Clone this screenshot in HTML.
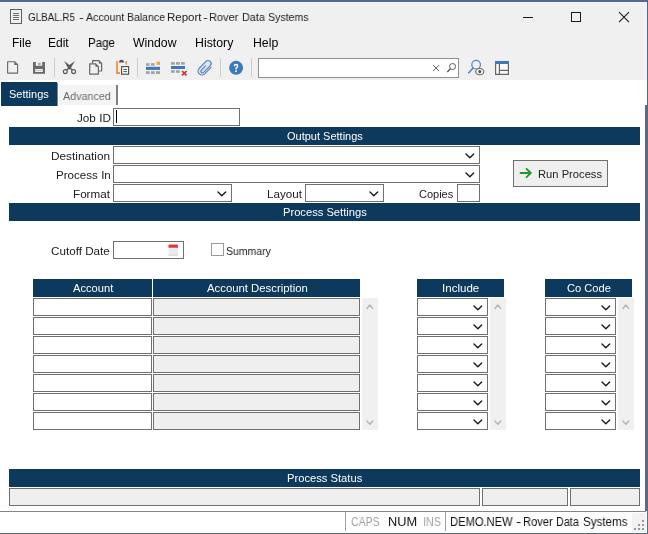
<!DOCTYPE html>
<html><head><meta charset="utf-8"><title>GLBAL.R5</title>
<style>
html,body{margin:0;padding:0;background:#fff;}
body{width:648px;height:534px;position:relative;overflow:hidden;font-family:"Liberation Sans",sans-serif;}
.t{will-change:transform;position:absolute;white-space:nowrap;line-height:16px;transform-origin:0 50%;}
.r{position:absolute;}
.bx{position:absolute;border:1px solid #707070;}
svg{display:block;overflow:visible}
</style></head><body>
<div class="r" style="left:0px;top:0px;width:648px;height:80px;background:#f0f0f0;"></div>
<div class="r" style="left:0px;top:0px;width:648px;height:2px;background:#54698f;"></div>
<div class="r" style="left:0px;top:2px;width:648px;height:1px;background:#f5f8fa;"></div>
<div class="r" style="left:644px;top:2px;width:3px;height:78px;background:#eef2fa;"></div>
<div class="r" style="left:646.5px;top:0px;width:1.5px;height:105px;background:#55658b;"></div>
<div class="r" style="left:645px;top:105px;width:3px;height:406px;background:#5d6885;"></div>
<div class="r" style="left:647px;top:511px;width:1px;height:23px;background:#5b6c93;"></div>
<div class="r" style="left:0px;top:533px;width:648px;height:1px;background:#54698f;"></div>
<div class="r" style="left:0px;top:511px;width:646px;height:1px;background:#858585;"></div>
<div class="r" style="left:1px;top:82px;width:56px;height:24px;background:#0d395d;"></div>
<div class="r" style="left:57px;top:83px;width:1.4px;height:22.6px;background:#858585;"></div>
<div class="r" style="left:59px;top:85px;width:56.5px;height:19.5px;background:#f4f4f4;"></div>
<div class="r" style="left:116px;top:85px;width:1.5px;height:20px;background:#808080;"></div>
<div class="r" style="left:9px;top:127px;width:631px;height:18px;background:#0d395d;"></div>
<div class="r" style="left:9px;top:203px;width:631px;height:18px;background:#0d395d;"></div>
<div class="r" style="left:9px;top:469px;width:631px;height:18px;background:#0d395d;"></div>
<div class="bx" style="left:113px;top:108px;width:125px;height:16px;background:#fff;"></div>
<div class="r" style="left:116px;top:110px;width:1px;height:13px;background:#000;"></div>
<div class="bx" style="left:113px;top:146px;width:365px;height:16px;background:#fff;"></div>
<svg class="r" style="left:464.80px;top:152.80px" width="9.7" height="5.8" viewBox="-1 -1 9.7 5.8"><path d="M0 0 L3.85 3.8 L7.7 0" fill="none" stroke="#1a1a1a" stroke-width="1.4" stroke-linecap="round" stroke-linejoin="round"/></svg>
<div class="bx" style="left:113px;top:165px;width:365px;height:16px;background:#fff;"></div>
<svg class="r" style="left:464.80px;top:171.80px" width="9.7" height="5.8" viewBox="-1 -1 9.7 5.8"><path d="M0 0 L3.85 3.8 L7.7 0" fill="none" stroke="#1a1a1a" stroke-width="1.4" stroke-linecap="round" stroke-linejoin="round"/></svg>
<div class="bx" style="left:113px;top:184px;width:117px;height:16px;background:#fff;"></div>
<svg class="r" style="left:216.80px;top:190.80px" width="9.7" height="5.8" viewBox="-1 -1 9.7 5.8"><path d="M0 0 L3.85 3.8 L7.7 0" fill="none" stroke="#1a1a1a" stroke-width="1.4" stroke-linecap="round" stroke-linejoin="round"/></svg>
<div class="bx" style="left:305px;top:184px;width:77px;height:16px;background:#fff;"></div>
<svg class="r" style="left:368.80px;top:190.80px" width="9.7" height="5.8" viewBox="-1 -1 9.7 5.8"><path d="M0 0 L3.85 3.8 L7.7 0" fill="none" stroke="#1a1a1a" stroke-width="1.4" stroke-linecap="round" stroke-linejoin="round"/></svg>
<div class="bx" style="left:457px;top:184px;width:21px;height:16px;background:#fff;"></div>
<div class="bx" style="left:113px;top:241px;width:69px;height:16px;background:#fff;"></div>
<svg class="r" style="left:167px;top:243px" width="13" height="14" viewBox="0 0 13 14"><rect x="1.5" y="2" width="9.5" height="11" rx="1" fill="#e4eef0"/><rect x="1.5" y="11.6" width="9.5" height="0.9" fill="#d0d4d6"/><path d="M1.5 4.8 V2.6 Q1.5 1.5 2.6 1.5 H9.9 Q11 1.5 11 2.6 V4.8 Z" fill="#e0373c"/></svg>
<div class="bx" style="left:211px;top:243px;width:11px;height:11px;background:#fff;border-color:#9a9a9a"></div>
<div class="bx" style="left:513px;top:160px;width:93px;height:25px;background:#efefef;border-color:#707070"></div>
<svg class="r" style="left:519px;top:167px" width="14" height="12" viewBox="0 0 14 12"><path d="M1.5 6 H11.5 M7.5 1.8 L11.8 6 L7.5 10.2" fill="none" stroke="#1e9a2c" stroke-width="1.8" stroke-linecap="round" stroke-linejoin="round"/></svg>
<div class="r" style="left:33px;top:279px;width:119px;height:18px;background:#0d395d;"></div>
<div class="r" style="left:153px;top:279px;width:207px;height:18px;background:#0d395d;"></div>
<div class="r" style="left:417px;top:279px;width:87px;height:18px;background:#0d395d;"></div>
<div class="r" style="left:545px;top:279px;width:87px;height:18px;background:#0d395d;"></div>
<div class="r" style="left:362px;top:298px;width:16px;height:132px;background:#f0f0f0;"></div>
<svg class="r" style="left:365.80px;top:304.40px" width="7.6" height="5.4" viewBox="-1 -1 7.6 5.4"><path d="M0 3.4 L2.8 0 L5.6 3.4" fill="none" stroke="#b4b4b4" stroke-width="1.5" stroke-linecap="round" stroke-linejoin="round"/></svg>
<svg class="r" style="left:365.80px;top:419.80px" width="7.6" height="5.4" viewBox="-1 -1 7.6 5.4"><path d="M0 0 L2.8 3.4 L5.6 0" fill="none" stroke="#b4b4b4" stroke-width="1.5" stroke-linecap="round" stroke-linejoin="round"/></svg>
<div class="r" style="left:490px;top:298px;width:16px;height:132px;background:#f0f0f0;"></div>
<svg class="r" style="left:493.80px;top:304.40px" width="7.6" height="5.4" viewBox="-1 -1 7.6 5.4"><path d="M0 3.4 L2.8 0 L5.6 3.4" fill="none" stroke="#b4b4b4" stroke-width="1.5" stroke-linecap="round" stroke-linejoin="round"/></svg>
<svg class="r" style="left:493.80px;top:419.80px" width="7.6" height="5.4" viewBox="-1 -1 7.6 5.4"><path d="M0 0 L2.8 3.4 L5.6 0" fill="none" stroke="#b4b4b4" stroke-width="1.5" stroke-linecap="round" stroke-linejoin="round"/></svg>
<div class="r" style="left:618px;top:298px;width:16px;height:132px;background:#f0f0f0;"></div>
<svg class="r" style="left:621.80px;top:304.40px" width="7.6" height="5.4" viewBox="-1 -1 7.6 5.4"><path d="M0 3.4 L2.8 0 L5.6 3.4" fill="none" stroke="#b4b4b4" stroke-width="1.5" stroke-linecap="round" stroke-linejoin="round"/></svg>
<svg class="r" style="left:621.80px;top:419.80px" width="7.6" height="5.4" viewBox="-1 -1 7.6 5.4"><path d="M0 0 L2.8 3.4 L5.6 0" fill="none" stroke="#b4b4b4" stroke-width="1.5" stroke-linecap="round" stroke-linejoin="round"/></svg>
<div class="bx" style="left:33px;top:298px;width:117px;height:16px;background:#fff;"></div>
<div class="bx" style="left:153px;top:298px;width:205px;height:16px;background:#efefef;"></div>
<div class="bx" style="left:417px;top:298px;width:69px;height:16px;background:#fff;"></div>
<svg class="r" style="left:472.80px;top:304.80px" width="9.7" height="5.8" viewBox="-1 -1 9.7 5.8"><path d="M0 0 L3.85 3.8 L7.7 0" fill="none" stroke="#1a1a1a" stroke-width="1.4" stroke-linecap="round" stroke-linejoin="round"/></svg>
<div class="bx" style="left:545px;top:298px;width:69px;height:16px;background:#fff;"></div>
<svg class="r" style="left:600.80px;top:304.80px" width="9.7" height="5.8" viewBox="-1 -1 9.7 5.8"><path d="M0 0 L3.85 3.8 L7.7 0" fill="none" stroke="#1a1a1a" stroke-width="1.4" stroke-linecap="round" stroke-linejoin="round"/></svg>
<div class="bx" style="left:33px;top:317px;width:117px;height:16px;background:#fff;"></div>
<div class="bx" style="left:153px;top:317px;width:205px;height:16px;background:#efefef;"></div>
<div class="bx" style="left:417px;top:317px;width:69px;height:16px;background:#fff;"></div>
<svg class="r" style="left:472.80px;top:323.80px" width="9.7" height="5.8" viewBox="-1 -1 9.7 5.8"><path d="M0 0 L3.85 3.8 L7.7 0" fill="none" stroke="#1a1a1a" stroke-width="1.4" stroke-linecap="round" stroke-linejoin="round"/></svg>
<div class="bx" style="left:545px;top:317px;width:69px;height:16px;background:#fff;"></div>
<svg class="r" style="left:600.80px;top:323.80px" width="9.7" height="5.8" viewBox="-1 -1 9.7 5.8"><path d="M0 0 L3.85 3.8 L7.7 0" fill="none" stroke="#1a1a1a" stroke-width="1.4" stroke-linecap="round" stroke-linejoin="round"/></svg>
<div class="bx" style="left:33px;top:336px;width:117px;height:16px;background:#fff;"></div>
<div class="bx" style="left:153px;top:336px;width:205px;height:16px;background:#efefef;"></div>
<div class="bx" style="left:417px;top:336px;width:69px;height:16px;background:#fff;"></div>
<svg class="r" style="left:472.80px;top:342.80px" width="9.7" height="5.8" viewBox="-1 -1 9.7 5.8"><path d="M0 0 L3.85 3.8 L7.7 0" fill="none" stroke="#1a1a1a" stroke-width="1.4" stroke-linecap="round" stroke-linejoin="round"/></svg>
<div class="bx" style="left:545px;top:336px;width:69px;height:16px;background:#fff;"></div>
<svg class="r" style="left:600.80px;top:342.80px" width="9.7" height="5.8" viewBox="-1 -1 9.7 5.8"><path d="M0 0 L3.85 3.8 L7.7 0" fill="none" stroke="#1a1a1a" stroke-width="1.4" stroke-linecap="round" stroke-linejoin="round"/></svg>
<div class="bx" style="left:33px;top:355px;width:117px;height:16px;background:#fff;"></div>
<div class="bx" style="left:153px;top:355px;width:205px;height:16px;background:#efefef;"></div>
<div class="bx" style="left:417px;top:355px;width:69px;height:16px;background:#fff;"></div>
<svg class="r" style="left:472.80px;top:361.80px" width="9.7" height="5.8" viewBox="-1 -1 9.7 5.8"><path d="M0 0 L3.85 3.8 L7.7 0" fill="none" stroke="#1a1a1a" stroke-width="1.4" stroke-linecap="round" stroke-linejoin="round"/></svg>
<div class="bx" style="left:545px;top:355px;width:69px;height:16px;background:#fff;"></div>
<svg class="r" style="left:600.80px;top:361.80px" width="9.7" height="5.8" viewBox="-1 -1 9.7 5.8"><path d="M0 0 L3.85 3.8 L7.7 0" fill="none" stroke="#1a1a1a" stroke-width="1.4" stroke-linecap="round" stroke-linejoin="round"/></svg>
<div class="bx" style="left:33px;top:374px;width:117px;height:16px;background:#fff;"></div>
<div class="bx" style="left:153px;top:374px;width:205px;height:16px;background:#efefef;"></div>
<div class="bx" style="left:417px;top:374px;width:69px;height:16px;background:#fff;"></div>
<svg class="r" style="left:472.80px;top:380.80px" width="9.7" height="5.8" viewBox="-1 -1 9.7 5.8"><path d="M0 0 L3.85 3.8 L7.7 0" fill="none" stroke="#1a1a1a" stroke-width="1.4" stroke-linecap="round" stroke-linejoin="round"/></svg>
<div class="bx" style="left:545px;top:374px;width:69px;height:16px;background:#fff;"></div>
<svg class="r" style="left:600.80px;top:380.80px" width="9.7" height="5.8" viewBox="-1 -1 9.7 5.8"><path d="M0 0 L3.85 3.8 L7.7 0" fill="none" stroke="#1a1a1a" stroke-width="1.4" stroke-linecap="round" stroke-linejoin="round"/></svg>
<div class="bx" style="left:33px;top:393px;width:117px;height:16px;background:#fff;"></div>
<div class="bx" style="left:153px;top:393px;width:205px;height:16px;background:#efefef;"></div>
<div class="bx" style="left:417px;top:393px;width:69px;height:16px;background:#fff;"></div>
<svg class="r" style="left:472.80px;top:399.80px" width="9.7" height="5.8" viewBox="-1 -1 9.7 5.8"><path d="M0 0 L3.85 3.8 L7.7 0" fill="none" stroke="#1a1a1a" stroke-width="1.4" stroke-linecap="round" stroke-linejoin="round"/></svg>
<div class="bx" style="left:545px;top:393px;width:69px;height:16px;background:#fff;"></div>
<svg class="r" style="left:600.80px;top:399.80px" width="9.7" height="5.8" viewBox="-1 -1 9.7 5.8"><path d="M0 0 L3.85 3.8 L7.7 0" fill="none" stroke="#1a1a1a" stroke-width="1.4" stroke-linecap="round" stroke-linejoin="round"/></svg>
<div class="bx" style="left:33px;top:412px;width:117px;height:16px;background:#fff;"></div>
<div class="bx" style="left:153px;top:412px;width:205px;height:16px;background:#efefef;"></div>
<div class="bx" style="left:417px;top:412px;width:69px;height:16px;background:#fff;"></div>
<svg class="r" style="left:472.80px;top:418.80px" width="9.7" height="5.8" viewBox="-1 -1 9.7 5.8"><path d="M0 0 L3.85 3.8 L7.7 0" fill="none" stroke="#1a1a1a" stroke-width="1.4" stroke-linecap="round" stroke-linejoin="round"/></svg>
<div class="bx" style="left:545px;top:412px;width:69px;height:16px;background:#fff;"></div>
<svg class="r" style="left:600.80px;top:418.80px" width="9.7" height="5.8" viewBox="-1 -1 9.7 5.8"><path d="M0 0 L3.85 3.8 L7.7 0" fill="none" stroke="#1a1a1a" stroke-width="1.4" stroke-linecap="round" stroke-linejoin="round"/></svg>
<div class="bx" style="left:9px;top:488px;width:469px;height:16px;background:#efefef;"></div>
<div class="bx" style="left:482px;top:488px;width:84px;height:16px;background:#efefef;"></div>
<div class="bx" style="left:570px;top:488px;width:68px;height:16px;background:#efefef;"></div>
<div class="r" style="left:345px;top:512px;width:1px;height:19px;background:#a0a0a0;"></div>
<div class="r" style="left:445px;top:512px;width:1px;height:19px;background:#a0a0a0;"></div>
<div class="r" style="left:632px;top:513px;width:14px;height:19px;background:#f2f2f2;"></div>
<div class="r" style="left:642px;top:520px;width:2px;height:2px;background:#9a9a9a;"></div>
<div class="r" style="left:638px;top:524px;width:2px;height:2px;background:#9a9a9a;"></div>
<div class="r" style="left:642px;top:524px;width:2px;height:2px;background:#9a9a9a;"></div>
<div class="r" style="left:634px;top:528px;width:2px;height:2px;background:#9a9a9a;"></div>
<div class="r" style="left:638px;top:528px;width:2px;height:2px;background:#9a9a9a;"></div>
<div class="r" style="left:642px;top:528px;width:2px;height:2px;background:#9a9a9a;"></div>
<!-- title icon -->
<svg class="r" style="left:0;top:0" width="648" height="82" viewBox="0 0 648 82">
<g fill="none" stroke="#5f5f5f" stroke-width="1">
<rect x="10.5" y="9.5" width="11" height="14"/>
<path d="M13 13.5H19M13 15.5H19M13 17.5H19M13 19.5H19" stroke="#6e6e6e"/>
</g>
<!-- window controls -->
<g fill="none" stroke="#1a1a1a" stroke-width="1">
<path d="M523 17.5H533"/>
<rect x="571.5" y="12.5" width="9" height="9"/>
<path d="M619 12.2L629 22.2M629 12.2L619 22.2" stroke-width="1.1"/>
</g>
<!-- separators -->
<g stroke="#cdcdcd" stroke-width="1">
<path d="M54.5 58V77M137.5 58V77M220.5 58V77M251.5 58V77"/>
</g>
<!-- new doc -->
<g fill="none" stroke="#686868" stroke-width="1.1" stroke-linejoin="round">
<path d="M7.6 61.7H14.6L17.6 64.7V73.1H7.6Z"/>
<path d="M14.4 61.7V65H17.6Z" fill="#666" stroke="none"/>
</g>
<!-- save -->
<g>
<rect x="33" y="62" width="12" height="11.8" fill="#6a6a6a"/>
<rect x="35.8" y="62" width="6.4" height="3.8" fill="#f0f0f0"/>
<rect x="38.2" y="62.7" width="2.4" height="2.6" fill="#a8a8a8"/>
<rect x="35.2" y="69" width="7.6" height="3" fill="#f0f0f0"/>
<rect x="36" y="70.2" width="6" height="0.7" fill="#b0b0b0"/>
</g>
<!-- scissors -->
<g fill="none" stroke="#5a5a5a" stroke-width="1.2">
<circle cx="65.3" cy="71.6" r="1.95"/>
<circle cx="73.6" cy="71.6" r="1.95"/>
<path d="M64.1 61L71.5 66.5L69 69.8Z" fill="#5a5a5a" stroke="none"/>
<path d="M74.8 61L67.4 66.5L69.9 69.8Z" fill="#5a5a5a" stroke="none"/>
<path d="M70 67.8L72.4 70.2M68.9 67.8L66.5 70.2" stroke-width="1.3"/>
</g>
<!-- copy -->
<g fill="none" stroke="#666" stroke-width="1.2" stroke-linejoin="round">
<path d="M92.6 63.2V60.7H99L101.6 63.3V71H99"/>
<path d="M98.8 60.7V63.4H101.6Z" fill="#666" stroke="none"/>
<path d="M89.7 63.8H95.6L98.4 66.6V74.2H89.7Z"/>
<path d="M95.4 63.8V66.8H98.4Z" fill="#666" stroke="none"/>
</g>
<!-- paste -->
<g>
<path d="M117 61V73H120" fill="none" stroke="#f0943a" stroke-width="1.8"/>
<path d="M126.2 61V64.6" fill="none" stroke="#f0943a" stroke-width="1.6"/>
<path d="M119 62.6Q119 59.8 121.5 59.8Q124 59.8 124 62.6Z" fill="#57506a"/>
<rect x="121.6" y="66.6" width="7" height="7.6" fill="#fff" stroke="#555" stroke-width="1.2"/>
<path d="M123.3 69.4H127M123.3 71.6H127" stroke="#555" stroke-width="1"/>
</g>
<!-- insert row -->
<g>
<rect x="146" y="63.2" width="3.6" height="2.5" fill="#a2a2a2"/><rect x="151" y="63.2" width="3.6" height="2.5" fill="#a2a2a2"/>
<rect x="156.6" y="61.7" width="3.4" height="3.2" fill="#f0a04a"/>
<rect x="146" y="66.8" width="14" height="3.1" fill="#3d78b8"/>
<rect x="146" y="71.2" width="3.6" height="2.8" fill="#a2a2a2"/><rect x="151" y="71.2" width="3.6" height="2.8" fill="#a2a2a2"/><rect x="156" y="71.2" width="4" height="2.8" fill="#a2a2a2"/>
</g>
<!-- delete row -->
<g>
<rect x="171" y="62.1" width="3.8" height="2.6" fill="#a2a2a2"/><rect x="176" y="62.1" width="3.8" height="2.6" fill="#a2a2a2"/><rect x="181" y="62.1" width="3.8" height="2.6" fill="#a2a2a2"/>
<rect x="171" y="66" width="14" height="3" fill="#3d78b8"/>
<rect x="171" y="70.2" width="3.8" height="2.6" fill="#a2a2a2"/><rect x="176" y="70.2" width="3.8" height="2.6" fill="#a2a2a2"/>
<path d="M182 71L186.6 75.4M186.6 71L182 75.4" stroke="#d22c3c" stroke-width="1.7" fill="none"/>
</g>
<!-- paperclip -->
<g transform="translate(204.7 67.6) rotate(44)" fill="none" stroke="#5881b2" stroke-width="1.15" stroke-linecap="round">
<path d="M-3.4 4.45V-5.3A3 3 0 0 1 2.6 -5.3V4.45A3 3 0 0 1 -3.4 4.45Z" fill="#d6e8f9" stroke="none"/>
<path d="M4.3 -4.6V4.45A3.85 3.85 0 0 1 -3.4 4.45V-5.3A3 3 0 0 1 2.6 -5.3V4.2A1.6 1.6 0 0 1 -0.6 4.2V-1.8"/>
</g>
<!-- help -->
<circle cx="236.1" cy="67.85" r="7" fill="#3a79bd"/>
<path d="M234.4 66.2Q234.4 64.6 236 64.6Q237.6 64.6 237.6 66.1Q237.6 67.1 236.7 67.7Q236 68.2 236 69.4" fill="none" stroke="#fff" stroke-width="1.5" stroke-linecap="butt"/>
<rect x="235.2" y="70.4" width="1.6" height="1.7" fill="#fff"/>
<!-- search box -->
<rect x="258.5" y="58.5" width="200" height="19" fill="#fff" stroke="#909090" stroke-width="1"/>
<path d="M433.1 65.1L439.1 71.1M439.1 65.1L433.1 71.1" stroke="#555" stroke-width="0.95" fill="none"/>
<g fill="none" stroke="#5a5a5a"><circle cx="452.6" cy="66.5" r="3" stroke-width="1"/><path d="M450.5 68.8L447.3 72" stroke-width="1.4"/></g>
<!-- find (blue magnifier + eye) -->
<g fill="none">
<circle cx="476.1" cy="64.7" r="4.3" stroke="#5585c2" stroke-width="1.2"/>
<path d="M473.1 68L468.8 72.8" stroke="#5585c2" stroke-width="1.6" stroke-linecap="round"/>
<ellipse cx="479.8" cy="71.6" rx="4.1" ry="3.1" fill="#f6f6f6" stroke="#6a6a6a" stroke-width="1.1"/>
<circle cx="479.8" cy="71.6" r="1.55" fill="#555"/>
</g>
<!-- layout -->
<g>
<rect x="495.6" y="63" width="12.8" height="11.3" fill="#fbfbfb"/>
<rect x="495" y="61" width="14" height="3" fill="#3d78b8"/>
<path d="M495.6 64V74.3H508.4V64M499.4 64V74.3M499.4 70.3H508.4" fill="none" stroke="#666" stroke-width="1.2"/>
</g>
</svg>

<span class="t" id="ti1" style="left:28.37px;top:9.02px;font-size:11.5px;color:#222;transform:scaleX(0.8556)">GLBAL.R5</span>
<span class="t" id="ti2" style="left:78.86px;top:9.02px;font-size:11.5px;color:#222;transform:scaleX(1.2727)">-</span>
<span class="t" id="ti3" style="left:85.97px;top:9.02px;font-size:11.5px;color:#222;transform:scaleX(0.9212)">Account</span>
<span class="t" id="ti4" style="left:127.09px;top:9.02px;font-size:11.5px;color:#222;transform:scaleX(0.9125)">Balance</span>
<span class="t" id="ti5" style="left:166.51px;top:9.02px;font-size:11.5px;color:#222;transform:scaleX(0.9910)">Report</span>
<span class="t" id="ti6" style="left:203.36px;top:9.02px;font-size:11.5px;color:#222;transform:scaleX(1.2727)">-</span>
<span class="t" id="ti7" style="left:209.04px;top:9.02px;font-size:11.5px;color:#222;transform:scaleX(0.9559)">Rover</span>
<span class="t" id="ti8" style="left:241.76px;top:9.02px;font-size:11.5px;color:#222;transform:scaleX(0.9376)">Data</span>
<span class="t" id="ti9" style="left:268.01px;top:9.02px;font-size:11.5px;color:#222;transform:scaleX(0.9209)">Systems</span>
<span class="t" id="m1" style="left:11.51px;top:35.44px;font-size:12px;color:#000;transform:scaleX(0.9859)">File</span>
<span class="t" id="m2" style="left:48.21px;top:35.44px;font-size:12px;color:#000;transform:scaleX(0.9924)">Edit</span>
<span class="t" id="m3" style="left:87.74px;top:35.44px;font-size:12px;color:#000;transform:scaleX(0.9623)">Page</span>
<span class="t" id="m4" style="left:132.95px;top:35.44px;font-size:12px;color:#000;transform:scaleX(1.0188)">Window</span>
<span class="t" id="m5" style="left:195.47px;top:35.44px;font-size:12px;color:#000;transform:scaleX(1.0262)">History</span>
<span class="t" id="m6" style="left:252.68px;top:35.44px;font-size:12px;color:#000;transform:scaleX(1.0237)">Help</span>
<span class="t" id="t1" style="left:8.96px;top:85.99px;font-size:11px;color:#fff;transform:scaleX(0.9910)">Settings</span>
<span class="t" id="t2" style="left:62.96px;top:87.79px;font-size:11px;color:#6a6a6a;transform:scaleX(0.9771)">Advanced</span>
<span class="t" id="l1" style="left:76.73px;top:110.19px;font-size:11px;color:#202020;transform:scaleX(1.0645)">Job ID</span>
<span class="t" id="l2" style="left:51.43px;top:148.19px;font-size:11px;color:#202020;transform:scaleX(1.0748)">Destination</span>
<span class="t" id="l3" style="left:55.95px;top:167.19px;font-size:11px;color:#202020;transform:scaleX(1.0547)">Process In</span>
<span class="t" id="l4" style="left:73.14px;top:186.19px;font-size:11px;color:#202020;transform:scaleX(1.0607)">Format</span>
<span class="t" id="l5" style="left:266.64px;top:186.19px;font-size:11px;color:#202020;transform:scaleX(1.0563)">Layout</span>
<span class="t" id="l6" style="left:419.20px;top:186.19px;font-size:11px;color:#202020;transform:scaleX(1.0000)">Copies</span>
<span class="t" id="l7" style="left:51.17px;top:243.19px;font-size:11px;color:#202020;transform:scaleX(1.0606)">Cutoff Date</span>
<span class="t" id="l8" style="left:226.08px;top:243.19px;font-size:11px;color:#202020;transform:scaleX(0.9535)">Summary</span>
<span class="t" id="h1" style="left:286.90px;top:127.79px;font-size:11px;color:#fff;transform:scaleX(1.0000)">Output Settings</span>
<span class="t" id="h2" style="left:282.69px;top:203.89px;font-size:11px;color:#fff;transform:scaleX(1.0142)">Process Settings</span>
<span class="t" id="h3" style="left:286.98px;top:469.89px;font-size:11px;color:#fff;transform:scaleX(1.0172)">Process Status</span>
<span class="t" id="g1" style="left:72.75px;top:280.19px;font-size:11px;color:#fff;transform:scaleX(1.0127)">Account</span>
<span class="t" id="g2" style="left:206.74px;top:280.19px;font-size:11px;color:#fff;transform:scaleX(1.0309)">Account Description</span>
<span class="t" id="g3" style="left:442.35px;top:280.19px;font-size:11px;color:#fff;transform:scaleX(1.0500)">Include</span>
<span class="t" id="g4" style="left:566.69px;top:280.19px;font-size:11px;color:#fff;transform:scaleX(1.0118)">Co Code</span>
<span class="t" id="rp" style="left:538.38px;top:166.19px;font-size:11px;color:#222;transform:scaleX(1.0170)">Run Process</span>
<span class="t" id="s1" style="left:350.66px;top:513.64px;font-size:12px;color:#a3a3a3;transform:scaleX(0.8724)">CAPS</span>
<span class="t" id="s2" style="left:387.53px;top:513.64px;font-size:12px;color:#111;transform:scaleX(1.0667)">NUM</span>
<span class="t" id="s3" style="left:423.10px;top:513.64px;font-size:12px;color:#a3a3a3;transform:scaleX(0.9027)">INS</span>
<span class="t" id="s4" style="left:449.67px;top:513.64px;font-size:12px;color:#111;transform:scaleX(0.9298)">DEMO.NEW</span>
<span class="t" id="s5" style="left:515.75px;top:513.64px;font-size:12px;color:#111;transform:scaleX(1.3000)">-</span>
<span class="t" id="s6" style="left:523.47px;top:513.64px;font-size:12px;color:#111;transform:scaleX(0.9301)">Rover</span>
<span class="t" id="s7" style="left:556.30px;top:513.64px;font-size:12px;color:#111;transform:scaleX(0.8990)">Data</span>
<span class="t" id="s8" style="left:582.77px;top:513.64px;font-size:12px;color:#111;transform:scaleX(0.9676)">Systems</span>
</body></html>
